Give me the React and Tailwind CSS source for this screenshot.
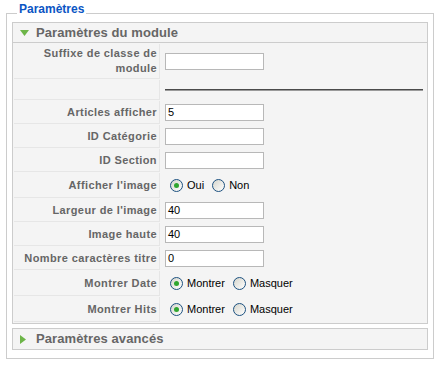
import React from "react";

const rows = [
    { label: ["Suffixe de classe de", "module"], type: "text", value: "", h: "h-[35px]" },
    { label: [], type: "hr", h: "h-[20px]" },
    { label: ["Articles afficher"], type: "text", value: "5", h: "h-[23px]" },
    { label: ["ID Catégorie"], type: "text", value: "", h: "h-[23px]" },
    { label: ["ID Section"], type: "text", value: "", h: "h-[23px]" },
    { label: ["Afficher l'image"], type: "radio", options: ["Oui", "Non"], h: "h-[25px]" },
    { label: ["Largeur de l'image"], type: "text", value: "40", h: "h-[23px]" },
    { label: ["Image haute"], type: "text", value: "40", h: "h-[23px]" },
    { label: ["Nombre caractères titre"], type: "text", value: "0", h: "h-[23px]" },
    { label: ["Montrer Date"], type: "radio", options: ["Montrer", "Masquer"], h: "h-[25px]" },
    { label: ["Montrer Hits"], type: "radio", options: ["Montrer", "Masquer"], h: "h-[25px]" },
];

function Radio({ checked, label }) {
    return (
        <span className="inline-flex items-center">
            <span className="ml-[5px] mr-[4px] w-[13px] h-[13px] rounded-full border border-[#1c5180] bg-linear-to-br from-[#d5d5cc] to-white flex items-center justify-center">
                {checked && <span className="w-[5px] h-[5px] rounded-full bg-[#2fa62f]" />}
            </span>
            <span className="text-[11px] text-black">{label}</span>
        </span>
    );
}

function Panel({ title, open, children }) {
    return (
        <div className="border border-[#cccccc] bg-[#f4f4f4] mb-[4px] last:mb-0">
            <div className={"h-[20px] flex items-center pl-[7px] " + (open ? "border-b border-[#cccccc]" : "")}>
                {open ? (
                    <svg width="9" height="6" viewBox="0 0 9 6" className="mr-[7px]">
                        <polygon points="0,0 9,0 4.5,6" fill="#6db548" />
                    </svg>
                ) : (
                    <svg width="6" height="9" viewBox="0 0 6 9" className="mr-[10px]">
                        <polygon points="0,0 6,4.5 0,9" fill="#6db548" />
                    </svg>
                )}
                <span className="text-[13px] font-bold text-[#666666] tracking-[0.1px]">{title}</span>
            </div>
            {children}
        </div>
    );
}

export default function App() {
    return (
        <div className="w-[442px] h-[369px] bg-white pt-[2px] pl-[6px] font-['Liberation_Sans',Arial,sans-serif]">
            <fieldset className="w-[428px] border border-[#cccccc] px-[5px] pb-[8px]">
                <legend className="ml-[5px] px-[2px] pb-[8px] text-[12px] leading-[14px] font-bold text-[#0b55c4]">
                    Paramètres
                </legend>
                <div className="-mt-[2px]">
                    <Panel title="Paramètres du module" open>
                        <table className="w-full border-separate border-spacing-[1px]">
                            <tbody>
                                {rows.map((r, i) => (
                                    <tr key={i}>
                                        <td className={"w-[146px] pr-[2px] text-right align-middle text-[11px] leading-[15px] font-bold tracking-[0.4px] text-[#666666] border-b border-r border-[#e6e6e6] " + r.h}>
                                            {r.label.map((l, j) => (
                                                <div key={j}>{l}</div>
                                            ))}
                                        </td>
                                        <td className="pl-[4px] pr-[3px] align-middle">
                                            {r.type === "text" && (
                                                <div className="w-[99px] h-[17px] border border-[#b8b8b8] bg-white px-[2px] text-[11px] leading-[15px] text-black">
                                                    {r.value}
                                                </div>
                                            )}
                                            {r.type === "hr" && (
                                                <div className="h-[2px] border-t border-[#4a4a4a] border-b border-b-[#9a9a9a]" />
                                            )}
                                            {r.type === "radio" && (
                                                <div className="flex items-center gap-[3px]">
                                                    <Radio checked label={r.options[0]} />
                                                    <Radio label={r.options[1]} />
                                                </div>
                                            )}
                                        </td>
                                    </tr>
                                ))}
                            </tbody>
                        </table>
                    </Panel>
                    <Panel title="Paramètres avancés" />
                </div>
            </fieldset>
        </div>
    );
}
